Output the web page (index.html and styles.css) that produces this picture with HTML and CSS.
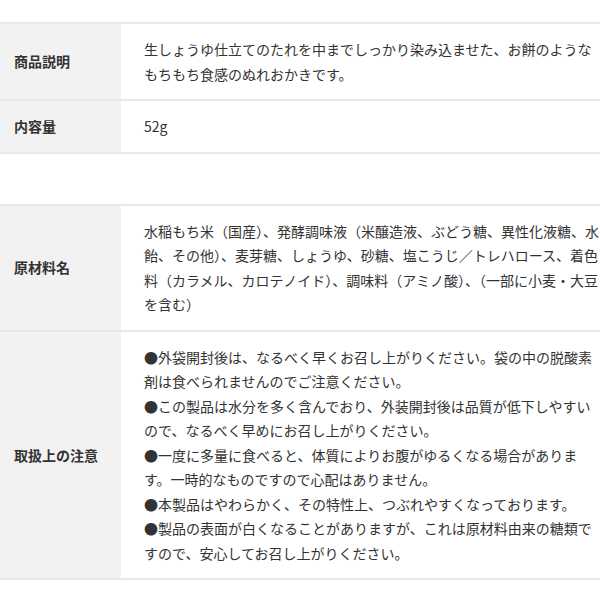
FILE: index.html
```html
<!DOCTYPE html>
<html lang="ja">
<head>
  <meta charset="UTF-8" />
  <meta name="viewport" content="width=device-width, initial-scale=1" />
  <title>商品情報</title>
  <link rel="stylesheet" href="styles.css">
</head>
<body>

  <!-- Page wrapper (table is wider than the window) -->
  <div class="page">

    <!-- Product info -->
    <table class="spec">
      <tr>
        <th>商品説明</th>
        <td>生しょうゆ仕立てのたれを中までしっかり染み込ませた、お餅のようなもちもち食感のぬれおかきです。</td>
      </tr>
      <tr>
        <th>内容量</th>
        <td>52g</td>
      </tr>
    </table>

    <!-- Ingredients and handling -->
    <table class="spec spec-second">
      <tr>
        <th>原材料名</th>
        <td>水稲もち米（国産）、発酵調味液（米醸造液、ぶどう糖、異性化液糖、水飴、その他）、麦芽糖、しょうゆ、砂糖、塩こうじ／トレハロース、着色料（カラメル、カロテノイド）、調味料（アミノ酸）、（一部に小麦・大豆を含む）</td>
      </tr>
      <tr>
        <th>取扱上の注意</th>
        <td>
          ●外袋開封後は、なるべく早くお召し上がりください。袋の中の脱酸素剤は食べられませんのでご注意ください。<br>
          ●この製品は水分を多く含んでおり、外装開封後は品質が低下しやすいので、なるべく早めにお召し上がりください。<br>
          ●一度に多量に食べると、体質によりお腹がゆるくなる場合があります。一時的なものですので心配はありません。<br>
          ●本製品はやわらかく、その特性上、つぶれやすくなっております。<br>
          ●製品の表面が白くなることがありますが、これは原材料由来の糖類ですので、安心してお召し上がりください。
        </td>
      </tr>
    </table>

  </div>

</body>
</html>
```

FILE: styles.css
```css
/* Basic reset */
* {
  margin: 0;
  padding: 0;
  box-sizing: border-box;
}

body {
  font-family: 'Noto Sans CJK JP', 'Noto Sans', sans-serif;
  font-size: 14px;
  line-height: 1.75;
  color: #333;
  background: #fff;
}

.page {
  width: 600px;
  overflow: hidden;
  padding-top: 22px;
}

/* Spec tables */
.spec {
  width: 630px;
  table-layout: fixed;
  border-collapse: collapse;
  border-top: 2px solid #e8e8e8;
}

.spec-second {
  margin-top: 50px;
}

.spec tr {
  border-bottom: 2px solid #e8e8e8;
}

.spec th {
  width: 121px;
  background: #f2f2f2;
  text-align: left;
  font-weight: bold;
  padding: 0 14px;
  vertical-align: middle;
}

.spec td {
  padding: 13px 28px 13px 23px;
  vertical-align: top;
}
```
